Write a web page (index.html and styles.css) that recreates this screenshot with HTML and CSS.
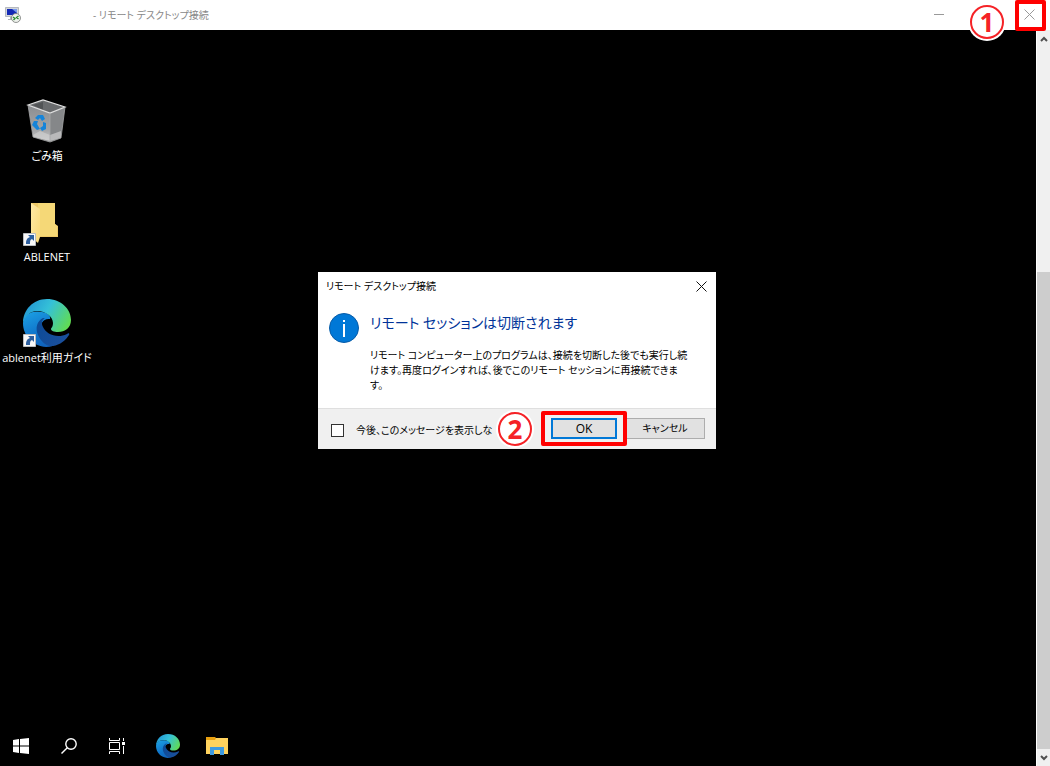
FILE: index.html
```html
<!DOCTYPE html>
<html lang="ja">
<head>
<meta charset="utf-8">
<meta name="viewport" content="width=device-width, initial-scale=1">
<title>リモート デスクトップ接続</title>
<link rel="stylesheet" href="styles.css">
</head>
<body>
<svg class="defs" aria-hidden="true">
  <defs>
    <linearGradient id="edge-top" x1="0" y1="0.3" x2="1" y2="0.7">
      <stop offset="0" stop-color="#2297d4"/><stop offset="0.45" stop-color="#35c1d8"/><stop offset="1" stop-color="#62dc50"/>
    </linearGradient>
    <linearGradient id="edge-left" x1="0.2" y1="0" x2="0.7" y2="1">
      <stop offset="0" stop-color="#1b9de2"/><stop offset="0.6" stop-color="#0f72c9"/><stop offset="1" stop-color="#1160b8"/>
    </linearGradient>
    <linearGradient id="edge-low" x1="0" y1="0" x2="1" y2="0.6">
      <stop offset="0" stop-color="#0b4a96"/><stop offset="1" stop-color="#1a4f9c"/>
    </linearGradient>
    <linearGradient id="bin-left" x1="0" y1="0" x2="0" y2="1">
      <stop offset="0" stop-color="#8b8d90"/><stop offset="0.7" stop-color="#a5a6a8"/><stop offset="1" stop-color="#c9c9c9"/>
    </linearGradient>
    <linearGradient id="folder-front" x1="0" y1="0" x2="1" y2="1">
      <stop offset="0" stop-color="#ffe9a6"/><stop offset="1" stop-color="#f9d877"/>
    </linearGradient>
  </defs>
  <symbol id="edge" viewBox="0 0 48 48">
    <path fill="url(#edge-left)" d="M0 24C1 15 9 11 19 13C26 14 28 18 27 20C20 19 17 25 18 31C20 39 27 44 36 43C32 46 28 48 23 48C10 47 0 37 0 24Z"/>
    <path fill="url(#edge-low)" d="M20 19C14 22 12 29 15 36C18 43 24 48 30 47C37 46 43 41 46 36C47 34 45 34 44 35C34 40 23 35 20 28C18 24 19 21 22 19Z"/>
    <path fill="url(#edge-top)" d="M0 24C0 11 10 0 24 0C38 0 48 10 48 21C48 29 42 33 35 33C31 33 28 32 28 30C28 29 30 28 30 24C30 18 23 12 14 12C7 12 2 17 0 24Z"/>
  </symbol>
  <symbol id="shortcut" viewBox="0 0 13 13">
    <path fill="#f8f8f8" stroke="#b9bcc0" d="M.5.5h12v12H.5z"/>
    <path fill="#2d5f9f" d="M5 2h6v6L9 6C7 7 7 8 7 11H3C3 7 4 5 7 4Z"/>
  </symbol>
</svg>

<header class="titlebar">
  <svg class="app-icon" viewBox="0 0 16 16" aria-hidden="true">
    <path fill="#d3d6da" stroke="#92979f" stroke-width=".6" d="M.5.5h13v9H.5z"/>
    <path fill="#1329b5" d="M2 2h10v6H2z"/><path fill="#7899ee" d="M7 2h5v4z"/>
    <path fill="#aeb2b6" d="M5 10h4v2h2v1H3v-1h2z"/>
    <circle cx="11" cy="11" r="4.5" fill="#eef1ec" stroke="#787b78" stroke-width=".8"/>
    <path fill="none" stroke="#238b2b" stroke-width="1.3" d="M8 10l2 1.5L8.5 13M13.500 9l-2 1.500 2 1.500"/>
  </svg>
  <span class="window-title">- リモート デスクトップ接続</span>
  <div class="window-controls">
    <button class="icon-button" type="button" aria-label="最小化"><svg width="10" height="11" viewBox="0 0 10 11"><path d="M0 5.500h10" stroke="#999"/></svg></button>
    <div class="marked-close">
      <button class="icon-button" type="button" aria-label="閉じる"><svg width="11" height="11" viewBox="0 0 11 11"><path d="M.5.5l10 10M10.500.5l-10 10" stroke="#999" fill="none"/></svg></button>
      <span class="step step-one">1</span>
      <span class="highlight highlight-close"></span>
    </div>
  </div>
</header>

<div class="viewport">
  <main class="desktop">
    <div class="shortcuts">
      <a class="shortcut" href="#bin">
        <svg class="shortcut-icon" viewBox="0 0 48 48" aria-hidden="true">
          <path fill="#696b6d" d="M5 8L20 3 42 10 27 16Z"/>
          <path fill="#515355" d="M10 8L20 5v8Z"/>
          <path fill="url(#bin-left)" d="M5 8L27 16V44L10 40Z"/>
          <path fill="#858789" d="M27 16L42 10 38 41 27 44Z"/>
          <path fill="#cfcfcf" d="M10 38L17 34 27 38 38 34V41L27 45 10 40Z" opacity=".7"/>
          <path fill="none" stroke="#e0e0e0" stroke-width="1.2" d="M5 8L20 3 42 10 27 16Z"/>
          <path fill="none" stroke="#a6a7a8" stroke-width=".8" d="M5 8L10 40 27 45 38 41 42 10M27 16V44"/>
          <path fill="#1684d9" d="M12 21L15 18 20 18 22 22 19 24 17 21 15 23ZM11 24L15 24 14 27 17 32 14 33 9 28ZM20 25L23 26 23 32 19 34 17 31 20 29Z"/>
        </svg>
        <span class="shortcut-label">ごみ箱</span>
      </a>
      <a class="shortcut" href="#ablenet">
        <svg class="shortcut-icon" viewBox="0 0 48 48" aria-hidden="true">
          <path fill="#eec968" d="M8 5h24v21l3 2v11H8z"/>
          <path fill="#f5d877" d="M15 5h17v21l2 2v10H16z"/>
          <path fill="url(#folder-front)" d="M8 5l9 6v28l-2 6-7-6z"/>
          <use href="#shortcut" x="0" y="35" width="13" height="13"/>
        </svg>
        <span class="shortcut-label">ABLENET</span>
      </a>
      <a class="shortcut" href="#guide">
        <svg class="shortcut-icon" viewBox="0 0 48 48" aria-hidden="true">
          <use href="#edge" width="48" height="48"/>
          <use href="#shortcut" x="0" y="35" width="13" height="13"/>
        </svg>
        <span class="shortcut-label">ablenet利用ガイド</span>
      </a>
    </div>

    <section class="dialog" role="dialog" aria-labelledby="dialog-title">
      <div class="dialog-bar">
        <span id="dialog-title">リモート デスクトップ接続</span>
        <button class="icon-button" type="button" aria-label="ダイアログを閉じる"><svg width="11" height="11" viewBox="0 0 11 11"><path d="M.5.5l10 10M10.500.5l-10 10" stroke="#111" fill="none"/></svg></button>
      </div>
      <div class="dialog-content">
        <svg class="info-icon" viewBox="0 0 30 30" aria-hidden="true"><circle cx="15" cy="15" r="14.500" fill="#0078d7" stroke="#075ba7"/><path fill="#fff" d="M14 7h2v2h-2zM14 11h2v13h-2z"/></svg>
        <div class="message">
          <h1 class="message-title">リモート セッションは切断されます</h1>
          <p class="message-text">リモート コンピューター上のプログラムは、接続を切断した後でも実行し続<br>けます。再度ログインすれば、後でこのリモート セッションに再接続できま<br>す。</p>
        </div>
      </div>
      <div class="dialog-footer">
        <div class="option"><input class="checkbox" type="checkbox" id="hide-message"><label class="option-label" for="hide-message">今後、このメッセージを表示しな</label></div>
        <div class="marked-ok">
          <button class="button button-default" type="button">OK</button>
          <span class="step step-two">2</span>
          <span class="highlight highlight-ok"></span>
        </div>
        <button class="button button-cancel" type="button">キャンセル</button>
      </div>
    </section>

    <nav class="taskbar" aria-label="タスクバー">
      <button class="task" type="button" aria-label="スタート"><svg width="16" height="16" viewBox="0 0 16 16" fill="#fff"><path d="M0 2l6-1v6.500H0zM7 1l9-1v7.500H7zM0 8.500h6V15l-6-1zM7 8.500h9V16l-9-1z"/></svg></button>
      <button class="task" type="button" aria-label="検索"><svg width="16" height="16" viewBox="0 0 16 16" fill="none" stroke="#fff" stroke-width="1.400"><circle cx="10" cy="6" r="5.200"/><path d="M6.300 9.700L.5 15.500"/></svg></button>
      <button class="task" type="button" aria-label="タスク ビュー"><svg width="16" height="16" viewBox="0 0 16 16" fill="none" stroke="#fff"><path d="M.5 0v2.500h10V0M.5 16v-2.500h10V16M.5 4.500h10v7H.5zM14.500 0v3M14.500 8v8"/><path fill="#fff" stroke="none" d="M13 4h3v3h-3z"/></svg></button>
      <button class="task" type="button" aria-label="Microsoft Edge"><svg width="24" height="24"><use href="#edge" width="24" height="24"/></svg></button>
      <button class="task" type="button" aria-label="エクスプローラー"><svg width="22" height="18" viewBox="0 0 22 18"><path fill="#ffd35e" d="M0 2h22v15H0z"/><path fill="#ffd35e" d="M9 1h13v3H9z"/><path fill="#e8a010" d="M0 0h9l1 1-1 2H0z"/><path fill="#3f9be0" d="M4 10h14v8h-4v-5H8v5H4z"/></svg></button>
    </nav>
  </main>
  <div class="scrollbar">
    <button class="scroll-arrow" type="button" aria-label="上へ"><svg width="8" height="6" viewBox="0 0 8 6"><path d="M1 5l3-3 3 3" fill="none" stroke="#505050" stroke-width="2"/></svg></button>
    <div class="scroll-track"><div class="scroll-thumb"></div></div>
    <button class="scroll-arrow" type="button" aria-label="下へ"><svg width="8" height="6" viewBox="0 0 8 6"><path d="M1 1l3 3 3-3" fill="none" stroke="#505050" stroke-width="2"/></svg></button>
  </div>
</div>
</body>
</html>
```
FILE: styles.css
```css
* { box-sizing: border-box; }

body {
  display: flex;
  flex-direction: column;
  min-height: 100vh;
  margin: 0;
  background: #000;
  color: #000;
  font: 10px/16px "Open Sans", "Noto Sans CJK JP", sans-serif;
  font-feature-settings: "palt";
}

button {
  padding: 0;
  border: 0;
  background: none;
  color: inherit;
  font: inherit;
  font-feature-settings: inherit;
}

svg { display: block; }

.defs { position: absolute; width: 0; height: 0; }

.titlebar {
  display: flex;
  align-items: center;
  height: 30px;
  padding-left: 5px;
  background: #fff;
  color: #888;
}

.app-icon { width: 16px; height: 16px; }
.window-title { margin-left: 72px; white-space: nowrap; }

.window-controls {
  display: flex;
  gap: 50px;
  height: 100%;
  margin-left: auto;
  padding-right: 1px;
}

.icon-button {
  display: flex;
  align-items: center;
  justify-content: center;
  width: 40px;
  height: 28px;
}

.marked-close, .marked-ok { position: relative; z-index: 1; }

.highlight {
  position: absolute;
  border: 4px solid #f00;
  border-radius: 2px;
  pointer-events: none;
}

.highlight-close { top: 0; right: 3px; width: 31px; height: 31px; }
.highlight-ok { top: -7px; left: -10px; width: 86px; height: 35px; }

.step {
  position: absolute;
  display: flex;
  align-items: center;
  justify-content: center;
  width: 34px;
  height: 34px;
  border: 2px solid #f52226;
  border-radius: 50%;
  background: #fff;
  box-shadow: 0 0 0 2px #fff;
  color: #f52226;
  font: bold 26px/28px "Noto Sans", sans-serif;
}

.step-one { top: 5px; right: 45px; }
.step-two { top: -6px; left: -53px; }

.viewport { display: flex; flex: 1; }

.desktop {
  position: relative;
  display: flex;
  flex: 1;
  flex-direction: column;
  justify-content: space-between;
  padding-top: 67px;
}

.shortcuts {
  display: flex;
  flex-direction: column;
  align-items: flex-start;
  gap: 34px;
}

.shortcut {
  display: flex;
  flex-direction: column;
  align-items: center;
  gap: 3px;
  width: 94px;
  color: #fff;
  font-size: 11px;
  text-decoration: none;
}

.shortcut-icon { width: 48px; height: 48px; }
.shortcut-label { white-space: nowrap; }

.taskbar { display: flex; height: 40px; }

.task {
  display: flex;
  align-items: center;
  justify-content: center;
  width: 48px;
}

.task:first-child { width: 42px; }
.task:nth-child(2) { width: 54px; }
.task:nth-child(3) { width: 42px; }
.task:nth-child(4) { width: 60px; }
.task:nth-child(5) { width: 38px; }

.scrollbar {
  display: flex;
  flex-direction: column;
  width: 14px;
  border-left: 1px solid #fff;
  background: #f0f0f0;
}

.scroll-arrow {
  display: flex;
  align-items: center;
  justify-content: center;
  height: 17px;
}

.scroll-track {
  display: flex;
  flex: 1;
  flex-direction: column;
  justify-content: flex-end;
}

.scroll-thumb { height: 68%; background: #cdcdcd; }

.dialog {
  position: absolute;
  top: 242px;
  left: 318px;
  width: 398px;
  background: #fff;
}

.dialog-bar {
  display: flex;
  align-items: center;
  justify-content: space-between;
  padding-left: 8px;
}

.dialog-bar .icon-button { width: 30px; }

.dialog-content {
  display: flex;
  gap: 11px;
  height: 108px;
  padding: 12px 11px 0;
}

.info-icon { flex: none; width: 30px; height: 30px; margin-top: 1px; }

.message-title {
  margin: 0 0 14px;
  color: #039;
  font-size: 14px;
  font-weight: 400;
  line-height: 22px;
}

.message-text {
  margin: 0;
  line-height: 15px;
  white-space: nowrap;
}

.dialog-footer {
  display: flex;
  align-items: flex-start;
  height: 41px;
  padding: 9px 11px 0 13px;
  border-top: 1px solid #dfdfdf;
  background: #f0f0f0;
}

.option {
  display: flex;
  align-items: center;
  gap: 12px;
  width: 220px;
  padding-top: 4px;
  white-space: nowrap;
}

.checkbox {
  appearance: none;
  width: 13px;
  height: 13px;
  margin: 0;
  border: 1px solid #333;
  background: #fff;
}

.button {
  height: 21px;
  border: 1px solid #adadad;
  background: #e1e1e1;
  line-height: 17px;
}

.button-default { display: block; width: 66px; border: 2px solid #0078d7; font-size: 12px; }
.button-cancel { width: 80px; margin-left: auto; }
```
